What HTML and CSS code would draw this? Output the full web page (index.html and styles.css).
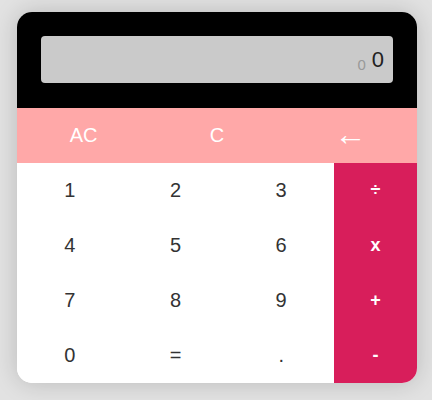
FILE: index.html
```html
<!DOCTYPE html>
<html>
<head>
<meta charset="utf-8">
<link rel="stylesheet" href="styles.css">
</head>
<body>
<div class="calc">
  <div class="screen">
    <div class="display">
      <span class="prev">0</span>
      <span class="current">0</span>
    </div>
  </div>
  <div class="top-row">
    <button class="key fn">AC</button>
    <button class="key fn">C</button>
    <button class="key fn back">&larr;</button>
  </div>
  <div class="pad">
    <button class="key num">1</button>
    <button class="key num">2</button>
    <button class="key num">3</button>
    <button class="key op">&divide;</button>
    <button class="key num">4</button>
    <button class="key num">5</button>
    <button class="key num">6</button>
    <button class="key op">x</button>
    <button class="key num">7</button>
    <button class="key num">8</button>
    <button class="key num">9</button>
    <button class="key op">+</button>
    <button class="key num">0</button>
    <button class="key num">=</button>
    <button class="key num">.</button>
    <button class="key op">-</button>
  </div>
</div>
</body>
</html>
```
FILE: styles.css
```css
html, body {
  margin: 0;
  height: 100%;
}
body {
  background: #e2e2e2;
  padding: 12px 0 0 17px;
  box-sizing: border-box;
  font-family: "Liberation Sans", Arial, sans-serif;
}
.calc {
  width: 400px;
  border-radius: 15px;
  overflow: hidden;
  background: #fff;
  box-shadow: 0 0 24px rgba(0, 0, 0, 0.18);
}
.screen {
  background: #000;
  padding: 24px 24px 25px;
}
.display {
  height: 47px;
  background: #cacaca;
  border-radius: 4px;
  display: flex;
  align-items: center;
  justify-content: flex-end;
  padding: 0 9px;
  gap: 6px;
}
.prev {
  color: #999;
  font-size: 15px;
  padding-top: 9px;
}
.current {
  color: #222;
  font-size: 22px;
  font-weight: 300;
}
.key {
  border: 0;
  margin: 0;
  padding: 0;
  height: 55px;
  font-family: inherit;
  background: transparent;
}
.top-row {
  display: grid;
  grid-template-columns: repeat(3, 1fr);
  background: #ffa8a8;
}
.fn {
  color: #fff;
  font-size: 20px;
}
.back {
  font-size: 32px;
  padding-bottom: 3px;
}
.pad {
  display: grid;
  grid-template-columns: repeat(3, 1fr) 83px;
}
.num {
  color: #333;
  font-size: 20px;
  background: #fff;
}
.op {
  color: #fff;
  font-size: 18px;
  font-weight: bold;
  background: #d81e5b;
}
```
